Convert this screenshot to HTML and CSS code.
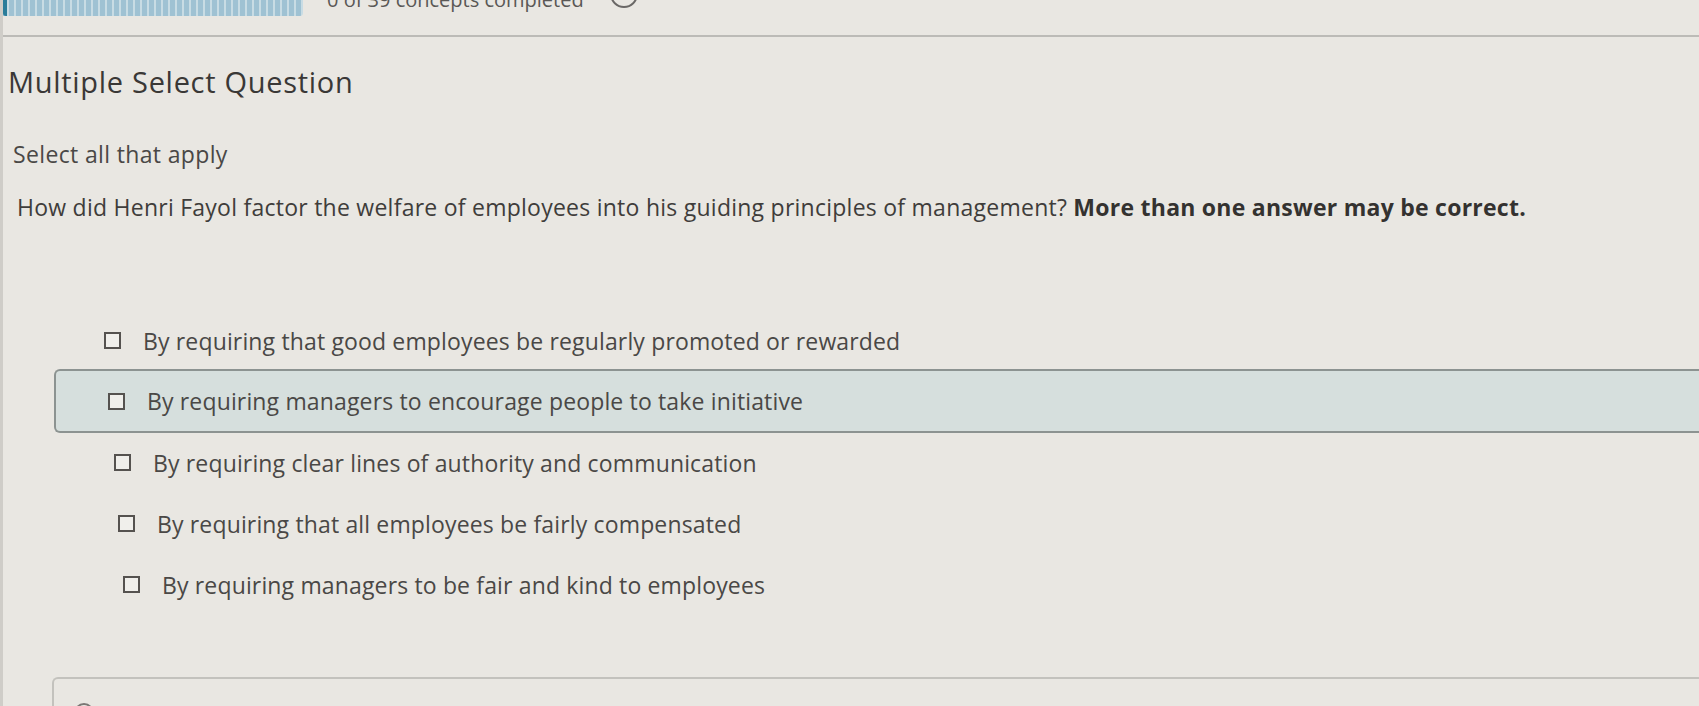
FILE: index.html
```html
<!DOCTYPE html>
<html lang="en">
<head>
<meta charset="utf-8">
<title>Multiple Select Question</title>
<link rel="stylesheet" href="styles.css">
</head>
<body>
<div class="page">
  <header class="topbar">
    <div class="progress"><div class="progress-fill"></div></div>
    <span class="status">0 of 39 concepts completed</span>
    <span class="status-icon"></span>
  </header>
  <main class="content">
    <h1 class="title">Multiple Select Question</h1>
    <p class="hint">Select all that apply</p>
    <p class="question">How did Henri Fayol factor the welfare of employees into his guiding principles of management? <strong>More than one answer may be correct.</strong></p>
    <ul class="options">
      <li class="option"><span class="checkbox"></span><span class="label">By requiring that good employees be regularly promoted or rewarded</span></li>
      <li class="option option-focus"><span class="checkbox"></span><span class="label">By requiring managers to encourage people to take initiative</span></li>
      <li class="option"><span class="checkbox"></span><span class="label">By requiring clear lines of authority and communication</span></li>
      <li class="option"><span class="checkbox"></span><span class="label">By requiring that all employees be fairly compensated</span></li>
      <li class="option"><span class="checkbox"></span><span class="label">By requiring managers to be fair and kind to employees</span></li>
    </ul>
    <div class="next-card">
      <span class="radio"></span>
    </div>
  </main>
</div>
</body>
</html>
```

FILE: styles.css
```css
html, body {
  margin: 0;
  padding: 0;
  height: 100%;
  overflow: hidden;
}

body {
  background: #e9e7e2;
  font-family: "Open Sans", Lato, "Liberation Sans", sans-serif;
  color: #3f3d3b;
}

.page {
  height: 706px;
  border-left: 3px solid #cfcdc8;
  box-sizing: border-box;
}

.topbar {
  display: flex;
  align-items: flex-start;
  height: 35px;
  border-bottom: 2px solid #bcbbb7;
}

.progress {
  width: 300px;
  height: 16px;
  background: repeating-linear-gradient(90deg, #9fc2d3 0 4px, #c8dce4 4px 6px, #9fc2d3 6px 7px);
  border-radius: 0 0 3px 0;
  display: flex;
}

.progress-fill {
  width: 4px;
  background: #2a7d9a;
  border-radius: 0 0 0 3px;
}

.status {
  margin-left: 24px;
  margin-top: -11px;
  font-size: 20px;
  color: #5a5856;
  line-height: 22px;
}

.status-icon {
  margin-left: 26px;
  margin-top: -20px;
  width: 24px;
  height: 24px;
  border: 2px solid #6a6866;
  border-radius: 50%;
}

.content {
  padding-left: 5px;
}

.title {
  margin: 28px 0 0;
  font-size: 29px;
  line-height: 34px;
  letter-spacing: 0.7px;
  font-weight: 400;
  color: #3a3836;
}

.hint {
  margin: 42px 0 0 5px;
  font-size: 23px;
  line-height: 26px;
  letter-spacing: 0.35px;
  color: #4a4846;
}

.question {
  margin: 27px 0 0 9px;
  font-size: 23px;
  line-height: 26px;
  letter-spacing: 0.25px;
  color: #3f3d3b;
}

.question strong {
  font-weight: 700;
  color: #343230;
}

.options {
  list-style: none;
  margin: 90px 0 0 46px;
  padding: 0;
}

.option {
  display: flex;
  align-items: center;
  gap: 22px;
  height: 61px;
  box-sizing: border-box;
  border: 2px solid transparent;
  border-right: none;
  font-size: 23px;
  letter-spacing: 0.15px;
  color: #4a4846;
}

.option:nth-child(1) { padding-left: 48px; }
.option:nth-child(2) { padding-left: 52px; }
.option:nth-child(3) { padding-left: 58px; }
.option:nth-child(4) { padding-left: 62px; }
.option:nth-child(5) { padding-left: 67px; }

.option-focus {
  background: #d6dfdd;
  border-color: #8c9391;
  border-radius: 6px 0 0 6px;
  height: 64px;
  margin: -2px 0 -1px;
}

.checkbox {
  flex: none;
  width: 13px;
  height: 13px;
  border: 2px solid #55524f;
  background: #f0efeb;
}

.next-card {
  margin: 62px 0 0 44px;
  height: 40px;
  border-top: 2px solid #c3c2bd;
  border-left: 2px solid #c3c2bd;
  border-radius: 6px 0 0 0;
  position: relative;
}

.radio {
  position: absolute;
  left: 20px;
  top: 24px;
  width: 16px;
  height: 16px;
  border: 2px solid #7a7875;
  border-radius: 50%;
}
```
